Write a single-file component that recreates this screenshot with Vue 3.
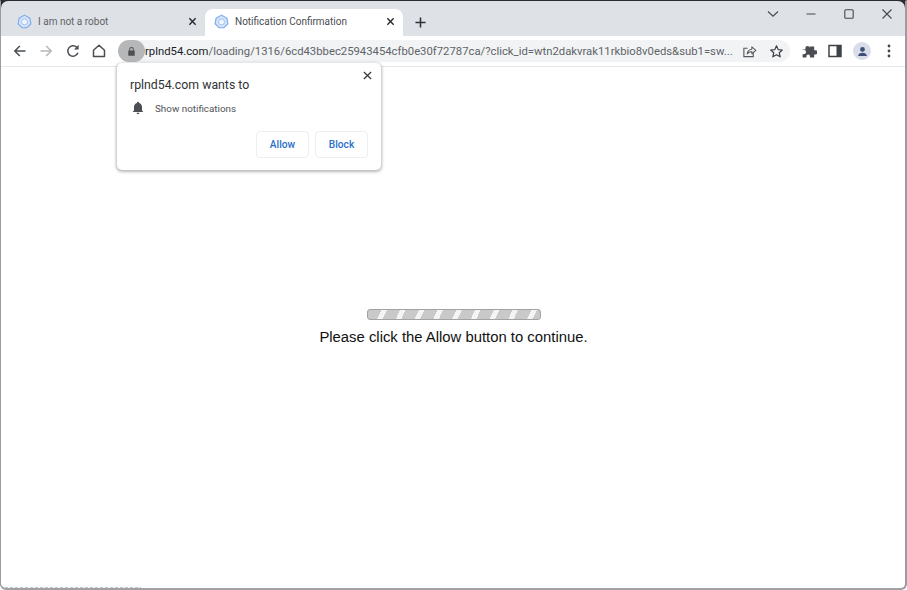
<script setup>
const tabs = [
  { title: 'I am not a robot', active: false },
  { title: 'Notification Confirmation', active: true }
]
</script>

<template>
  <div class="window">
    <header class="tabstrip">
      <div v-for="tab in tabs" :key="tab.title" class="tab" :class="{ active: tab.active }">
        <svg class="favicon" viewBox="0 0 16 16">
          <path d="M8 1.2 13.8 4.6 14.8 10.6 10.6 14.6H5.4L1.2 10.6 2.2 4.6Z" fill="#d6e4f8" stroke="#7aa7ec" stroke-width="1.2" stroke-linejoin="round" />
          <circle cx="8" cy="8.4" r="3.2" fill="#f1f6fd" stroke="#9cbdf0" stroke-width="1" />
        </svg>
        <span class="tab-title">{{ tab.title }}</span>
        <svg class="tab-close" viewBox="0 0 10 10"><path d="M1.5 1.5 8.5 8.5M8.5 1.5 1.5 8.5" stroke="#26282b" stroke-width="1.5" /></svg>
      </div>
      <svg class="newtab" viewBox="0 0 12 12"><path d="M6 .5V11.5M.5 6H11.5" stroke="#303236" stroke-width="1.7" /></svg>
      <div class="win-controls">
        <svg viewBox="0 0 12 12"><path d="M1 3.5 6 8.2 11 3.5" fill="none" stroke="#45484c" stroke-width="1.1" /></svg>
        <svg viewBox="0 0 12 12"><path d="M1.5 6H10.5" stroke="#45484c" stroke-width="1.1" /></svg>
        <svg viewBox="0 0 12 12"><rect x="1.8" y="1.8" width="8.4" height="8.4" rx="1" fill="none" stroke="#45484c" stroke-width="1.1" /></svg>
        <svg viewBox="0 0 12 12"><path d="M1.5 1.5 10.5 10.5M10.5 1.5 1.5 10.5" stroke="#45484c" stroke-width="1.1" /></svg>
      </div>
    </header>

    <nav class="toolbar">
      <div class="nav-buttons">
        <svg viewBox="0 0 16 16"><path d="M13.5 8H3M7.8 3 2.8 8l5 5" fill="none" stroke="#4a4d51" stroke-width="1.5" /></svg>
        <svg viewBox="0 0 16 16"><path d="M2.5 8H13M8.2 3l5 5-5 5" fill="none" stroke="#b4b7bb" stroke-width="1.5" /></svg>
        <svg viewBox="0 0 16 16"><path d="M12.9 9.8A5.2 5.2 0 1 1 11.7 4.3" fill="none" stroke="#4a4d51" stroke-width="1.5" /><path d="M13.6 1.8V6.4H9Z" fill="#4a4d51" /></svg>
        <svg viewBox="0 0 16 16"><path d="M8 2.2 13.5 7.2V13.5H2.5V7.2Z" fill="none" stroke="#4a4d51" stroke-width="1.5" stroke-linejoin="round" /></svg>
      </div>
      <div class="omnibox">
        <div class="lock-pill">
          <svg viewBox="0 0 12 12"><path d="M2.5 5H9.5V10.5H2.5Z" fill="#4c4f53" /><path d="M4 5V3.6a2 2 0 0 1 4 0V5" fill="none" stroke="#4c4f53" stroke-width="1.1" /></svg>
        </div>
        <div class="url"><span class="host">rplnd54.com</span>/loading/1316/6cd43bbec25943454cfb0e30f72787ca/?click_id=wtn2dakvrak11rkbio8v0eds&amp;sub1=sw...</div>
        <svg class="omni-icon share" viewBox="0 0 16 16"><path d="M12 9.5V13.5H2V4.5H6" fill="none" stroke="#55585c" stroke-width="1.2" /><path d="M5.5 10.5C6 7.5 8 5.8 10.5 5.6V3L14.8 6.8 10.5 10.4V7.9C8.5 8 6.8 8.8 5.5 10.5Z" fill="none" stroke="#55585c" stroke-width="1.1" stroke-linejoin="round" /></svg>
        <svg class="omni-icon" viewBox="0 0 16 16"><path d="M8 1.9 9.8 6 14.2 6.4 10.9 9.3 11.9 13.7 8 11.4 4.1 13.7 5.1 9.3 1.8 6.4 6.2 6Z" fill="none" stroke="#3d4044" stroke-width="1.3" stroke-linejoin="round" /></svg>
      </div>
      <div class="actions">
        <svg viewBox="0 0 16 16"><path d="M1.6 6.4H4.4V5A2.1 2.1 0 0 1 8.6 5V3.4H13.2V7.2H14.4A2.1 2.1 0 0 1 14.4 11.4H13.2V14.6H9V13.2A1.8 1.8 0 0 0 5.4 13.2V14.6H1.6V11.2H3A2.1 2.1 0 0 0 3 7H1.6Z" fill="#4a4d51" /></svg>
        <svg viewBox="0 0 16 16"><path d="M2 2.5H14V13.5H2Z" fill="none" stroke="#3f4246" stroke-width="1.5" /><path d="M9.5 2.5H14V13.5H9.5Z" fill="#3f4246" /></svg>
        <div class="avatar">
          <svg viewBox="0 0 16 16"><circle cx="8" cy="5.4" r="2.9" fill="#3c4f76" /><path d="M2.6 13.4C3 10.6 5.2 9.6 8 9.6s5 1 5.4 3.8Z" fill="#3c4f76" /></svg>
        </div>
        <svg viewBox="0 0 16 16"><circle cx="8" cy="3" r="1.4" fill="#43464a" /><circle cx="8" cy="8" r="1.4" fill="#43464a" /><circle cx="8" cy="13" r="1.4" fill="#43464a" /></svg>
      </div>
    </nav>

    <main class="page">
      <div class="progress"></div>
      <p class="message">Please click the Allow button to continue.</p>
    </main>

    <aside class="popup">
      <svg class="popup-close" viewBox="0 0 10 10"><path d="M1 1 9 9M9 1 1 9" stroke="#3b3e42" stroke-width="1.5" /></svg>
      <h1 class="popup-title">rplnd54.com wants to</h1>
      <div class="permission">
        <svg viewBox="0 0 14 14"><path d="M7 .8A1 1 0 0 1 8 1.9C10 2.4 11 4 11 6V9.4L12.4 11H1.6L3 9.4V6C3 4 4 2.4 6 1.9A1 1 0 0 1 7 .8Z" fill="#4b4e52" /><path d="M5.6 11.8H8.4A1.4 1.4 0 0 1 5.6 11.8Z" fill="#4b4e52" /></svg>
        <span>Show notifications</span>
      </div>
      <div class="popup-buttons">
        <button class="btn">Allow</button>
        <button class="btn">Block</button>
      </div>
    </aside>
    <div class="status-trace"></div>
  </div>
</template>

<style scoped>
.window {
  position: relative;
  width: 907px;
  height: 590px;
  box-sizing: border-box;
  display: flex;
  flex-direction: column;
  overflow: hidden;
  background: #2a2c30;
  border-top: 1px solid #2a2c30;
  border-left: 1px solid #9a9c9f;
  border-right: 2px solid #9a9c9f;
  border-bottom: 2px solid #a0a2a5;
  border-radius: 0 0 6px 6px;
  font-family: Roboto, "Open Sans", sans-serif;
  color: #3c4043;
}
.window::before,
.window::after {
  content: "";
  position: absolute;
  top: 0;
  width: 1px;
  height: 97px;
  background: #2a2c30;
  z-index: 2;
}
.window::before { left: -1px; }
.window::after { right: -1px; }
.tabstrip {
  flex: none;
  height: 35px;
  display: flex;
  align-items: flex-end;
  padding-left: 7px;
  background: #dee1e6;
  border-radius: 7px 7px 0 0;
}
.tab {
  width: 197px;
  height: 27px;
  box-sizing: border-box;
  display: flex;
  align-items: center;
  padding: 0 8px 2px 9px;
  font-size: 10px;
  color: #5f6368;
}
.tab.active {
  width: 198px;
  background: #fff;
  border-radius: 8px 8px 0 0;
  color: #4a4d51;
}
.favicon {
  width: 15px;
  height: 15px;
  flex: none;
  margin-right: 6px;
}
.tab-title {
  flex: 1;
  white-space: nowrap;
}
.tab-close {
  width: 9px;
  height: 9px;
  flex: none;
}
.newtab {
  width: 11px;
  height: 11px;
  margin: 0 0 8px 12px;
}
.win-controls {
  margin-left: auto;
  align-self: flex-start;
  display: flex;
  gap: 26px;
  padding: 7px 12px 0 0;
}
.win-controls svg {
  width: 12px;
  height: 12px;
}
.toolbar {
  flex: none;
  height: 30px;
  display: flex;
  align-items: center;
  padding-left: 11px;
  background: #fff;
  border-bottom: 1px solid #e5e7ea;
}
.nav-buttons {
  display: flex;
  gap: 10.3px;
  width: 106px;
}
.nav-buttons svg {
  width: 16px;
  height: 16px;
}
.omnibox {
  width: 672px;
  height: 22px;
  flex: none;
  display: flex;
  align-items: center;
  background: #f1f3f4;
  border-radius: 11px;
}
.lock-pill {
  width: 27px;
  height: 22px;
  flex: none;
  display: flex;
  align-items: center;
  justify-content: center;
  background: #b6b7b8;
  border-radius: 11px;
}
.lock-pill svg {
  width: 11px;
  height: 11px;
}
.url {
  width: 590px;
  flex: none;
  font-size: 11.3px;
  white-space: nowrap;
  color: #5f6368;
}
.host { color: #202124; }
.omni-icon {
  width: 15px;
  height: 15px;
  flex: none;
  margin-left: 12px;
}
.omni-icon.share { margin-left: 7px; }
.actions {
  display: flex;
  align-items: center;
  margin-left: 11px;
  gap: 10px;
}
.actions > svg {
  width: 16px;
  height: 16px;
}
.avatar {
  width: 18px;
  height: 18px;
  display: flex;
  align-items: center;
  justify-content: center;
  border-radius: 50%;
  background: #d9dde8;
}
.avatar svg {
  width: 13px;
  height: 13px;
}
.page {
  flex: 1;
  display: flex;
  flex-direction: column;
  align-items: center;
  padding: 242px 0 0 1px;
  background: #fff;
}
.progress {
  width: 174px;
  height: 11px;
  box-sizing: border-box;
  border: 1px solid #a3a3a3;
  border-radius: 3px;
  background: repeating-linear-gradient(115deg, #c9c9c9 0 12px, #f4f4f4 12px 17px);
}
.message {
  margin: 8px 0 0;
  font-family: "Liberation Sans", Arial, sans-serif;
  font-size: 14.85px;
  line-height: 18px;
  color: #111;
}
.popup {
  position: absolute;
  left: 116px;
  top: 62px;
  width: 264px;
  height: 107px;
  box-sizing: border-box;
  padding: 14px 13px 0;
  background: #fff;
  border-radius: 5px;
  box-shadow: 0 1px 3px 1px rgba(60, 64, 67, .36);
}
.popup-close {
  position: absolute;
  top: 8px;
  right: 9px;
  width: 9px;
  height: 9px;
}
.popup-title {
  margin: 0;
  font-size: 12.3px;
  line-height: 17px;
  font-weight: 400;
  color: #303236;
}
.permission {
  display: flex;
  align-items: center;
  gap: 10px;
  margin-top: 7px;
  padding-left: 1px;
  font-size: 9.85px;
  color: #505357;
}
.permission svg {
  width: 14px;
  height: 14px;
}
.popup-buttons {
  display: flex;
  justify-content: flex-end;
  gap: 6px;
  margin-top: 16px;
}
.btn {
  width: 53px;
  height: 27px;
  padding: 0;
  background: #fff;
  border: 1px solid #eceef0;
  border-radius: 4px;
  font-family: inherit;
  font-size: 10.2px;
  font-weight: 500;
  color: #2a6fc9;
}
.status-trace {
  position: absolute;
  left: 4px;
  bottom: 0;
  width: 136px;
  height: 1px;
  background: repeating-linear-gradient(90deg, #c4c4c4 0 3px, #f6f6f6 3px 5px);
}
</style>

<style>
html, body { background: #fff; overflow: hidden; }
</style>
